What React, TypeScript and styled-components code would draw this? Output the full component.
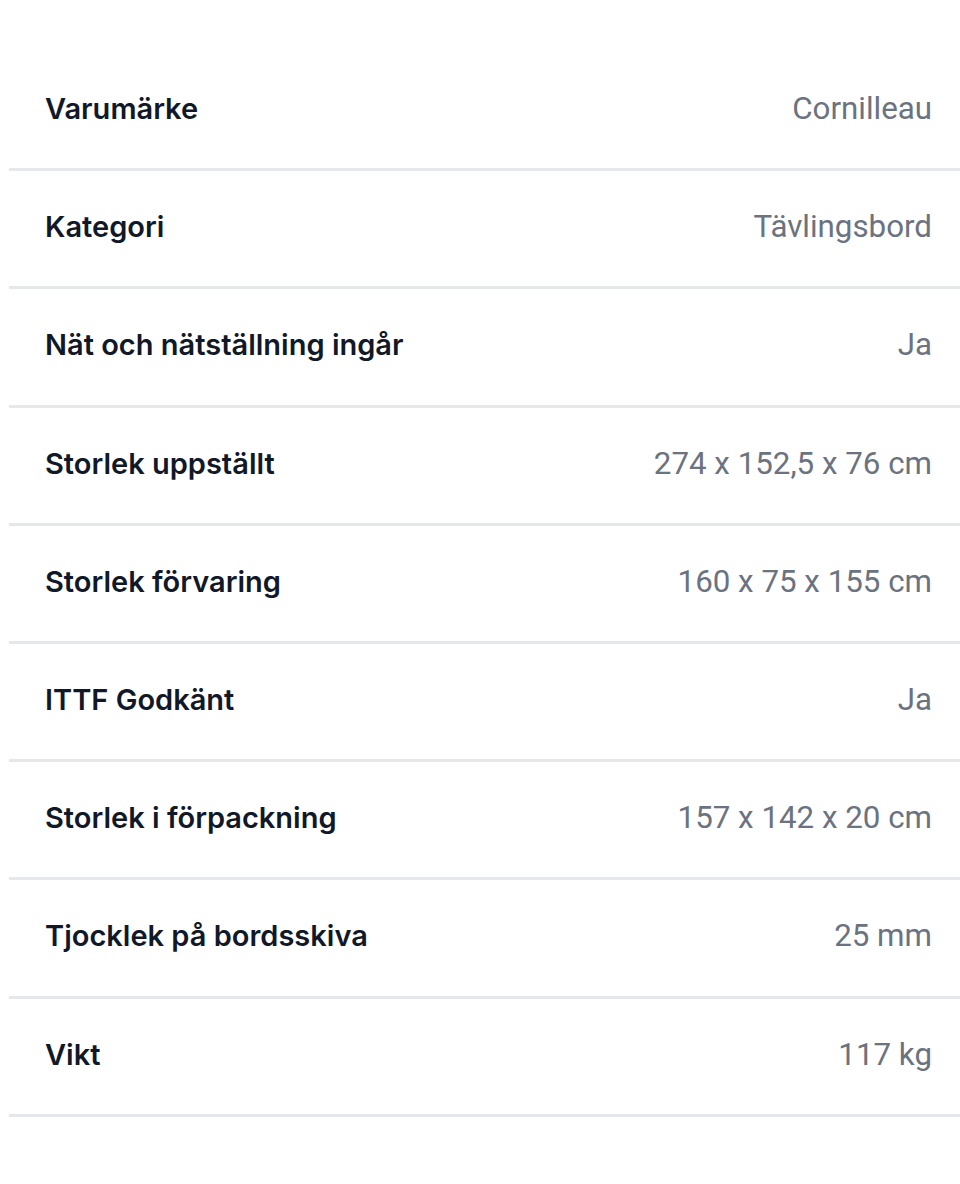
import styled, { createGlobalStyle } from 'styled-components'

interface Spec {
    label: string
    value: string
}

const specs: Spec[] = [
    { label: 'Varumärke', value: 'Cornilleau' },
    { label: 'Kategori', value: 'Tävlingsbord' },
    { label: 'Nät och nätställning ingår', value: 'Ja' },
    { label: 'Storlek uppställt', value: '274 x 152,5 x 76 cm' },
    { label: 'Storlek förvaring', value: '160 x 75 x 155 cm' },
    { label: 'ITTF Godkänt', value: 'Ja' },
    { label: 'Storlek i förpackning', value: '157 x 142 x 20 cm' },
    { label: 'Tjocklek på bordsskiva', value: '25 mm' },
    { label: 'Vikt', value: '117 kg' },
]

const App = () => {
    return <>
        <GlobalStyle />
        <SpecList>
            {specs.map(s => (
                <Row key={s.label}>
                    <Label>{s.label}</Label>
                    <Value>{s.value}</Value>
                </Row>
            ))}
        </SpecList>
    </>
}

export default App

const GlobalStyle = createGlobalStyle`
    body {
        margin:0;
        background:#fff;
    }
`
const SpecList = styled.dl`
    margin:0;
    padding:53px 0 0 9px;
`
const Row = styled.div`
    display:flex;
    justify-content:space-between;
    align-items:center;
    height:111.2px;
    padding:0 28px 4px 36px;
    border-bottom:3px solid #e5e7eb;
`
const Label = styled.dt`
    font-family: Inter, sans-serif;
    font-weight:600;
    font-size:29px;
    color:#111827;
`
const Value = styled.dd`
    margin:0;
    font-family: Roboto, sans-serif;
    font-size:31.3px;
    color:#6b7280;
`
